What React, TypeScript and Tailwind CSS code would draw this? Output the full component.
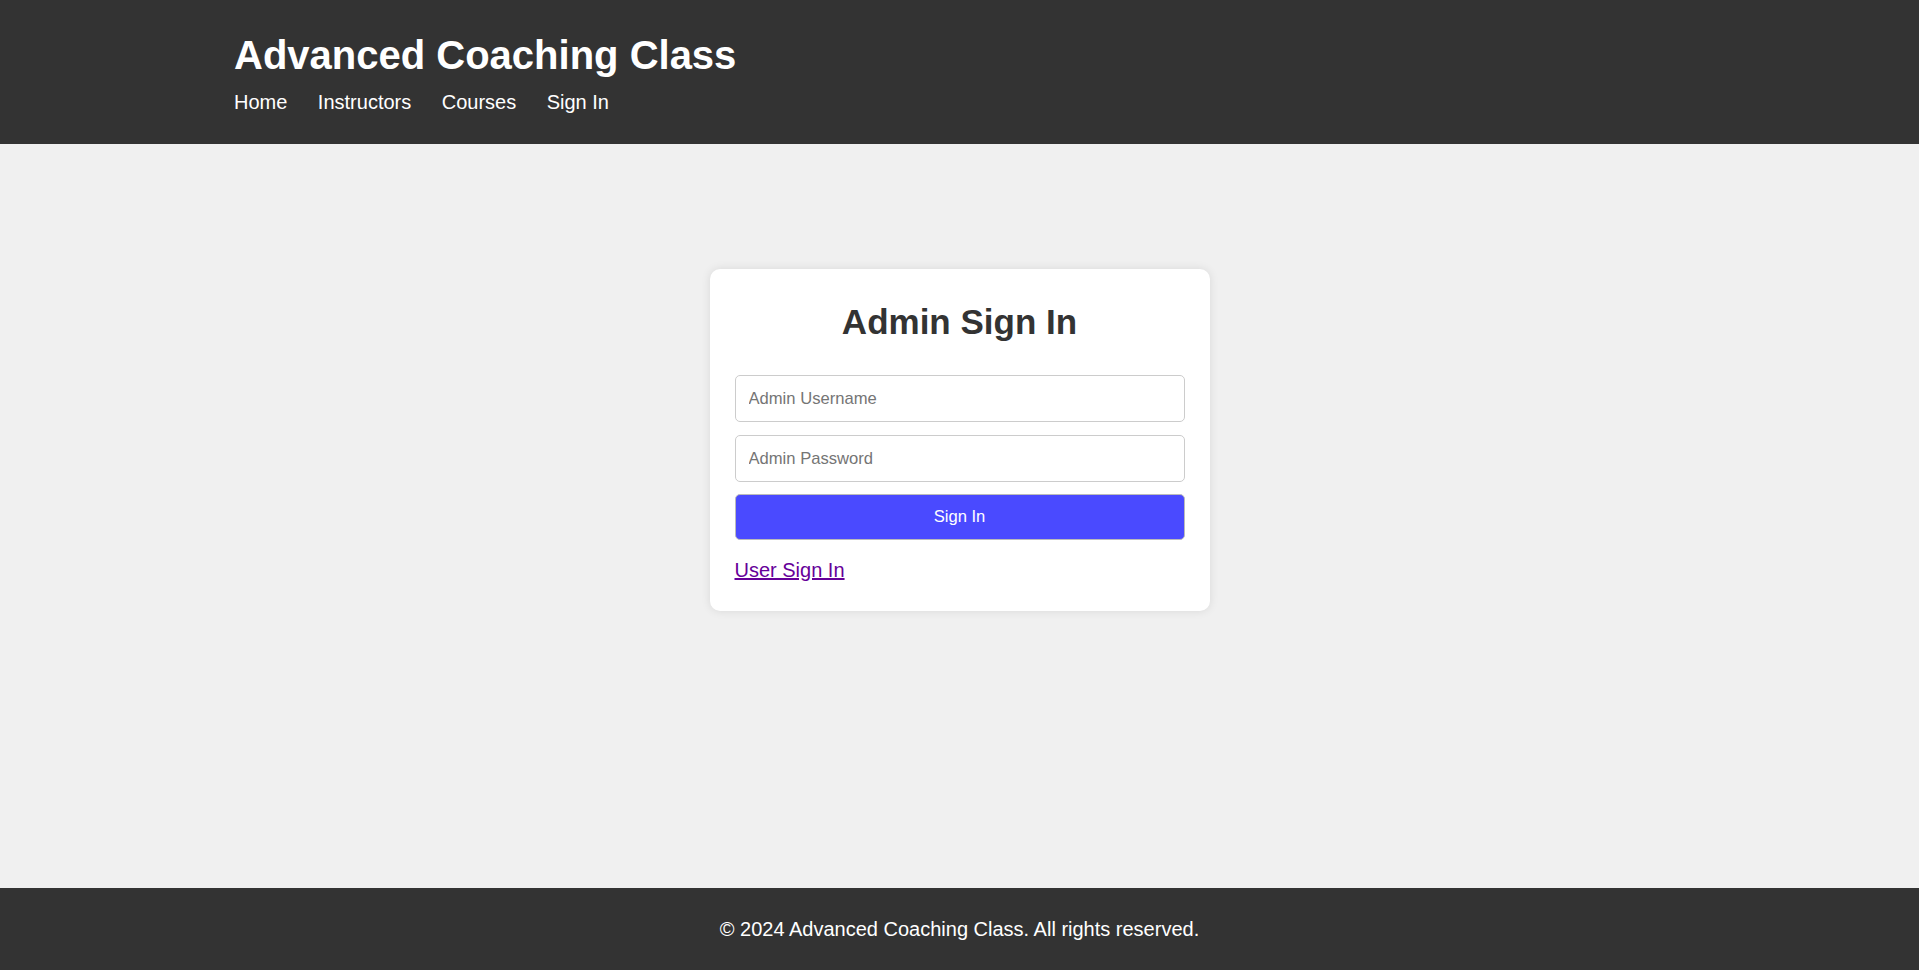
import React from 'react';

const navLinks = ['Home', 'Instructors', 'Courses', 'Sign In'];

function Header() {
    return (
        <header className="bg-[#333] text-white">
            <div className="mx-auto w-full max-w-[1451px] pt-[32px] pb-[30px]">
                <h1 className="text-[40px] font-bold leading-[46px]">Advanced Coaching Class</h1>
                <nav className="mt-[13px]">
                    <ul className="flex gap-[30.5px] text-[20px] leading-[23px]">
                        {navLinks.map((link) => (
                            <li key={link}>
                                <a href="#" className="text-white no-underline">{link}</a>
                            </li>
                        ))}
                    </ul>
                </nav>
            </div>
        </header>
    );
}

function SignInCard() {
    return (
        <div className="w-[500px] rounded-[10px] bg-white px-[25px] pt-[33px] pb-[29px] shadow-[0_0_10px_rgba(0,0,0,0.1)]">
            <h2 className="text-center text-[35px] font-bold leading-[40px] text-[#333]">Admin Sign In</h2>
            <form className="mt-[33px] flex flex-col" onSubmit={(e) => e.preventDefault()}>
                <input
                    type="text"
                    placeholder="Admin Username"
                    className="h-[47px] w-full rounded-[5px] border border-[#ccc] bg-white px-[13px] text-[16.6px] text-[#333] placeholder:text-[#757575] outline-none"
                />
                <input
                    type="password"
                    placeholder="Admin Password"
                    className="mt-[13px] h-[47px] w-full rounded-[5px] border border-[#ccc] bg-white px-[13px] text-[16.6px] text-[#333] placeholder:text-[#757575] outline-none"
                />
                <button
                    type="submit"
                    className="mt-[12px] h-[46px] w-full rounded-[5px] border border-[#bbb] bg-[#4a4aff] text-[16.6px] text-white"
                >
                    Sign In
                </button>
            </form>
            <a href="#" className="mt-[19px] block w-fit text-[20px] leading-[23px] text-[#660099] underline">
                User Sign In
            </a>
        </div>
    );
}

export default function App() {
    return (
        <div className="flex min-h-[970px] flex-col bg-[#f0f0f0] font-['Liberation_Sans',Arial,sans-serif]">
            <Header />
            <main className="flex flex-1 justify-center pt-[125px]">
                <div>
                    <SignInCard />
                </div>
            </main>
            <footer className="flex h-[82px] items-center justify-center bg-[#333] text-[20px] text-white">
                © 2024 Advanced Coaching Class. All rights reserved.
            </footer>
        </div>
    );
}
